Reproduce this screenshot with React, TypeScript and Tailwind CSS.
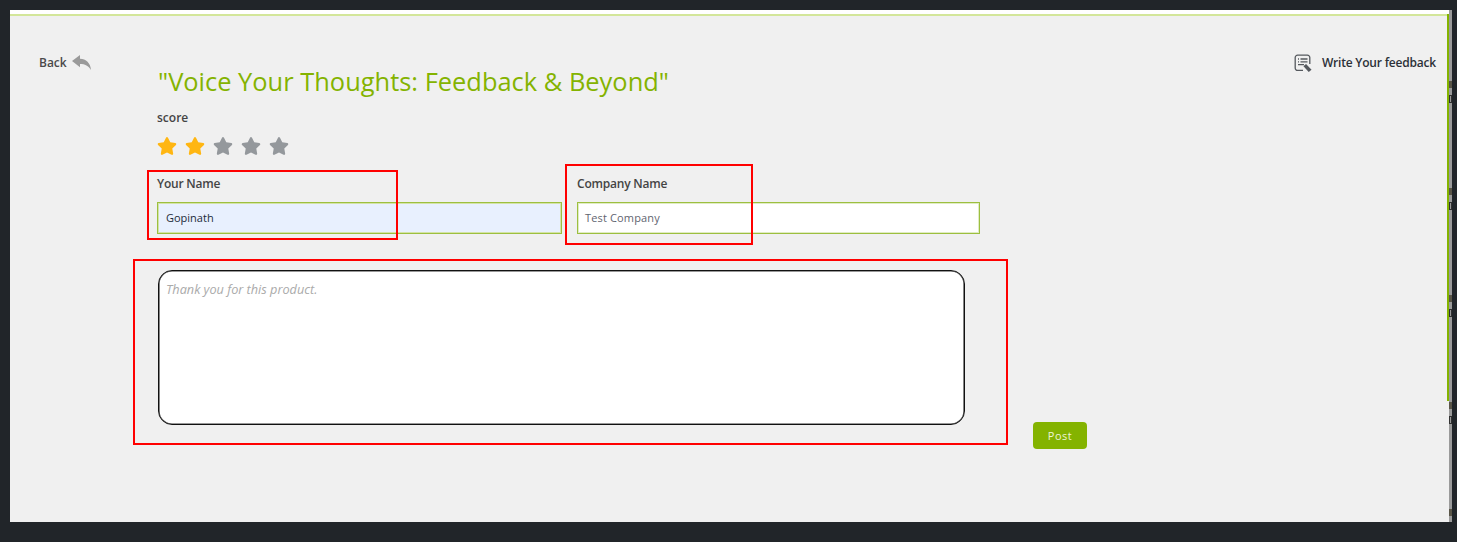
import { FaStar } from "react-icons/fa";

const font = { fontFamily: '"Open Sans", sans-serif' };

function BackIcon() {
  return (
    <svg width="19" height="15" viewBox="0 0 19 15" fill="#9a9a9a" className="-mt-[1px]">
      <path d="M0 6L8 0V3.8C14 4 18.6 8 19 15C16.4 10.8 13 9 8 9V12.2Z" />
    </svg>
  );
}

function FeedbackIcon() {
  return (
    <svg width="18" height="18" viewBox="0 0 18 18" fill="none" stroke="#55595e" strokeWidth="1.3">
      <path d="M9 16.4H3.6a2.4 2.4 0 0 1-2.4-2.4V3.6a2.4 2.4 0 0 1 2.4-2.4h9.8a2.4 2.4 0 0 1 2.4 2.4V10" />
      <path d="M4 5h1M6.5 5h7M4 7.8h1M6.5 7.8h7M4 10.6h6" />
      <path d="M10.4 12.2l1.6-1.4 4.6 4.8-1.8 1.5z" fill="#55595e" />
    </svg>
  );
}

// red annotation rectangles drawn over the form
function Mark({ className }: { className: string }) {
  return <div className={`absolute border-2 border-[#ff0000] pointer-events-none ${className}`} />;
}

function ScrollMarks({ last }: { last?: boolean }) {
  return (
    <div className="flex h-[107px] shrink-0 flex-col">
      <div className="h-[7px] bg-[#5a5648]" />
      {!last && <div className="mt-[7px] h-[8px] border border-[#333333]" />}
    </div>
  );
}

export default function App() {
  const stars = [true, true, false, false, false];

  return (
    <div className="flex h-[542px] w-[1457px] overflow-hidden bg-[#212529] pt-[10px] pl-[10px] pb-[20px]" style={font}>
      <div className="relative flex w-[1439px] flex-col bg-[#f0f0f0]">
        <div className="h-[4px] bg-white" />
        <div className="h-[2px] bg-[#d3e69a]" />

        <div className="absolute right-0 top-[4px] h-[387px] w-[2px] bg-[#84b300]" />

        <div className="flex items-start">
          {/* back link */}
          <div className="flex w-[147px] items-center gap-[5px] pl-[29px] pt-[37px]">
            <span className="text-[12px] font-semibold leading-[20px] text-[#4a4a4a]">Back</span>
            <BackIcon />
          </div>

          <div className="w-[1000px] pt-[47px]">
            <h1 className="ml-[1px] text-[25.45px] font-normal leading-[36px] text-[#84b300]">
              "Voice Your Thoughts: Feedback &amp; Beyond"
            </h1>
            <p className="mt-[9px] text-[12px] font-semibold leading-[20px] text-[#444444]">score</p>
            <div className="mt-[8px] flex h-[20px] items-center gap-[8px]">
              {stars.map((on, i) => (
                <FaStar key={i} className={`text-[20px] ${on ? "text-[#ffb612]" : "text-[#94989c]"}`} />
              ))}
            </div>

            <div className="mt-[18px] flex gap-[15px]">
              <div className="w-[405px]">
                <label className="block text-[12px] font-semibold leading-[20px] tracking-[-0.2px] text-[#444444]">Your Name</label>
                <div className="mt-[8px] flex h-[32px] items-center border border-[#9dbf3f] bg-[#e8f0fe] px-[8px] text-[11px] text-[#222b3a] shadow-[inset_0_0_0_1px_#d3e3a8]">
                  Gopinath
                </div>
              </div>
              <div className="w-[403px]">
                <label className="block text-[12px] font-semibold leading-[20px] tracking-[-0.2px] text-[#444444]">Company Name</label>
                <div className="mt-[8px] flex h-[32px] items-center border border-[#9dbf3f] bg-white px-[7px] text-[11px] tracking-[0.15px] text-[#5f6570] shadow-[inset_0_0_0_1px_#e0ecc4]">
                  Test Company
                </div>
              </div>
            </div>

            <div className="mt-[36px] flex items-end">
              <div className="ml-[1px] h-[155px] w-[807px] rounded-[14px] border border-[#111111] bg-white px-[7px] pt-[9px] text-[12.7px] italic leading-[18px] text-[#aaaaaa] shadow-[inset_0_0_0_0.6px_#333333]">
                Thank you for this product.
              </div>
              <button className="mb-[-24px] ml-[68px] h-[27px] w-[54px] rounded-[4px] bg-[#84b300] pt-[1px] text-[11px] tracking-[0.5px] text-[#eef5d8]">
                Post
              </button>
            </div>
          </div>

          {/* write feedback link */}
          <div className="ml-auto flex items-center gap-[10px] pr-[13px] pt-[37px]">
            <FeedbackIcon />
            <span className="text-[12px] font-semibold leading-[20px] tracking-[-0.2px] text-[#2c3038]">Write Your feedback</span>
          </div>
        </div>

        <Mark className="left-[137px] top-[160px] h-[70px] w-[251px]" />
        <Mark className="left-[555px] top-[154px] h-[81px] w-[188px]" />
        <Mark className="left-[123px] top-[249px] h-[186px] w-[875px]" />
      </div>

      {/* scrollbar strip */}
      <div className="flex w-[3px] flex-col overflow-hidden bg-[#9a9a9a] pt-[71px]">
        <ScrollMarks />
        <ScrollMarks />
        <ScrollMarks />
        <ScrollMarks />
        <ScrollMarks last />
      </div>
    </div>
  );
}
